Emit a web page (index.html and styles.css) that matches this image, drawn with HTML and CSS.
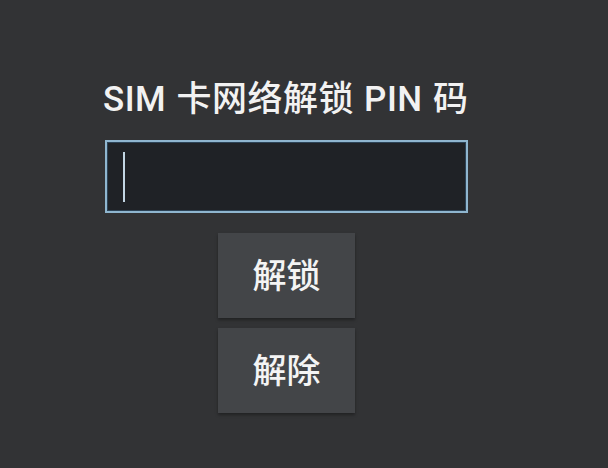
FILE: index.html
```html
<!DOCTYPE html>
<html lang="zh-CN">
<head>
<meta charset="utf-8">
<link rel="stylesheet" href="styles.css">
</head>
<body>
<main class="screen">
  <h1 class="title">SIM 卡网络解锁 PIN 码</h1>
  <div class="pin-box"><span class="cursor"></span></div>
  <div class="actions">
    <button class="btn">解锁</button>
    <button class="btn">解除</button>
  </div>
</main>
</body>
</html>
```
FILE: styles.css
```css
html, body {
  margin: 0;
  padding: 0;
  background: #323335;
  width: 608px;
  height: 468px;
  overflow: hidden;
  font-family: Roboto, "Noto Sans CJK SC", sans-serif;
}
.screen {
  width: 363px;
  margin-left: 105px;
  padding-top: 79px;
  display: flex;
  flex-direction: column;
}
.title {
  margin: 0 0 0 -2px;
  font-family: Roboto, "Noto Sans CJK SC", sans-serif;
  font-size: 35px;
  font-weight: 500;
  letter-spacing: 0.5px;
  word-spacing: 1px;
  line-height: 42px;
  color: #f2f2f2;
  white-space: nowrap;
}
.pin-box {
  margin-top: 19px;
  height: 69px;
  border: 2px solid #8fb6cf;
  background: #1f2226;
  box-shadow: inset 0 0 0 1px #2c4356;
  display: flex;
  align-items: center;
  padding-left: 16px;
}
.cursor {
  width: 2px;
  height: 50px;
  background: #c2d6e3;
}
.actions {
  margin-top: 20px;
  display: flex;
  flex-direction: column;
  align-items: center;
  gap: 10px;
}
.btn {
  width: 137px;
  height: 85px;
  border: none;
  background: #434548;
  color: #f4f4f4;
  font-family: "Noto Sans CJK SC", sans-serif;
  font-size: 34px;
  font-weight: 500;
  padding: 0 0 5px 0;
  box-shadow: 0 2px 3px rgba(0,0,0,0.35);
}
```
